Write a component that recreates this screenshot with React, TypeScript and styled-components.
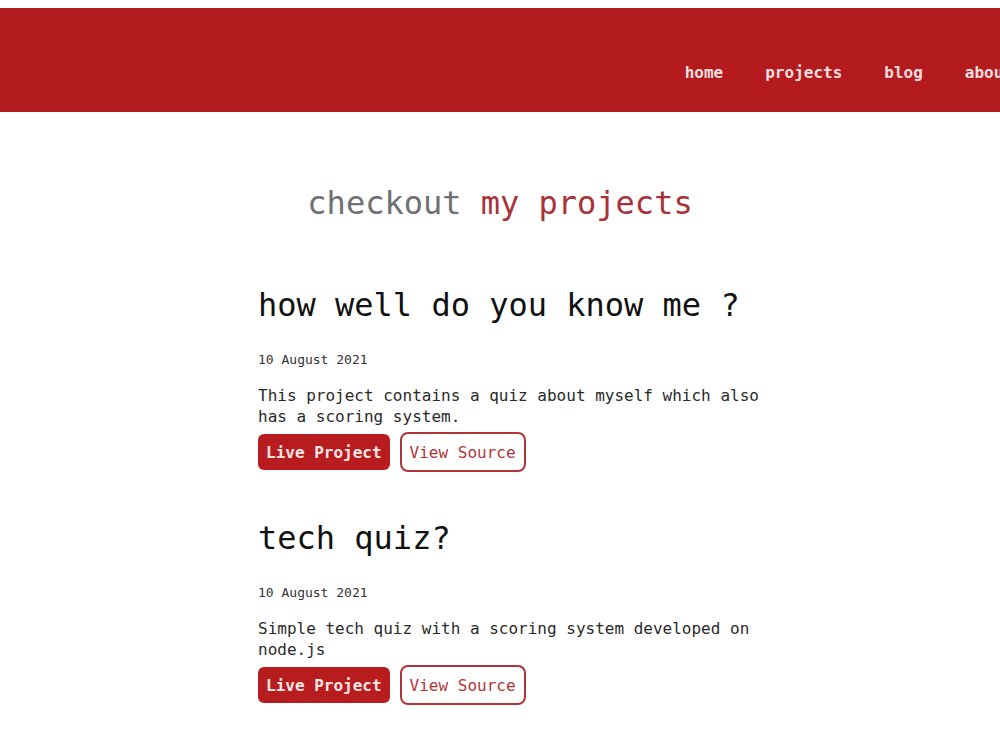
import React from "react";
import styled, { createGlobalStyle } from "styled-components";

type Project = {
  title: string;
  date: string;
  description: string;
};

const projects: Project[] = [
  {
    title: "how well do you know me ?",
    date: "10 August 2021",
    description:
      "This project contains a quiz about myself which also has a scoring system.",
  },
  {
    title: "tech quiz?",
    date: "10 August 2021",
    description:
      "Simple tech quiz with a scoring system developed on node.js",
  },
];

const links = ["home", "projects", "blog", "about"];

export default function App() {
  return (
    <>
      <GlobalStyle />
      <Header>
        <Nav>
          {links.map((link) => (
            <NavLink key={link} href="#">
              {link}
            </NavLink>
          ))}
        </Nav>
      </Header>
      <Main>
        <PageTitle>
          checkout <Accent>my projects</Accent>
        </PageTitle>
        <List>
          {projects.map((p) => (
            <Card key={p.title}>
              <CardTitle>{p.title}</CardTitle>
              <CardDate>{p.date}</CardDate>
              <CardText>{p.description}</CardText>
              <Actions>
                <LiveButton href="#">Live Project</LiveButton>
                <SourceButton href="#">View Source</SourceButton>
              </Actions>
            </Card>
          ))}
        </List>
      </Main>
    </>
  );
}

const GlobalStyle = createGlobalStyle`
  html, body {
    margin: 0;
    padding: 0;
    background: #ffffff;
    overflow-x: hidden;
  }
  body {
    font-family: "DejaVu Sans Mono", "Liberation Mono", monospace;
    color: #222;
  }
  * {
    box-sizing: border-box;
  }
`;

const Header = styled.header`
  margin-top: 8px;
  height: 104px;
  background-color: #b31b1e;
  display: flex;
  justify-content: flex-end;
  align-items: center;
  padding-top: 24px;
`;

// the menu runs a little past the right edge of the window
const Nav = styled.nav`
  display: flex;
  margin-right: -34px;
`;

const NavLink = styled.a`
  padding: 0 21px;
  font-size: 16px;
  font-weight: bold;
  color: #f7dede;
  text-decoration: none;
`;

const Main = styled.main`
  display: flex;
  flex-direction: column;
  align-items: center;
  padding-bottom: 40px;
`;

const PageTitle = styled.h1`
  margin: 72px 0 0;
  font-size: 32px;
  font-weight: normal;
  color: #6d7075;
  text-align: center;
`;

const Accent = styled.span`
  color: #a8323a;
`;

const List = styled.div`
  width: 520px;
  padding-left: 18px;
  display: flex;
  flex-direction: column;
  gap: 47px;
  margin-top: 64px;
`;

const Card = styled.section`
  display: flex;
  flex-direction: column;
`;

const CardTitle = styled.h2`
  margin: 0;
  font-size: 32px;
  font-weight: normal;
  color: #111;
`;

const CardDate = styled.p`
  margin: 28px 0 0;
  font-size: 13px;
  color: #333;
`;

const CardText = styled.p`
  margin: 18px 0 0;
  font-size: 16px;
  line-height: 21px;
  color: #2a2a2a;
`;

const Actions = styled.div`
  display: flex;
  align-items: center;
  gap: 10px;
  margin-top: 5px;
`;

const LiveButton = styled.a`
  display: inline-flex;
  align-items: center;
  height: 36px;
  padding: 0 8px;
  border-radius: 6px;
  background-color: #b71c1f;
  color: #fbe6e6;
  font-size: 16px;
  font-weight: bold;
  text-decoration: none;
`;

const SourceButton = styled.a`
  display: inline-flex;
  align-items: center;
  height: 40px;
  padding: 0 8px;
  border: 2px solid #b0353a;
  border-radius: 8px;
  color: #b0353a;
  font-size: 16px;
  text-decoration: none;
`;
